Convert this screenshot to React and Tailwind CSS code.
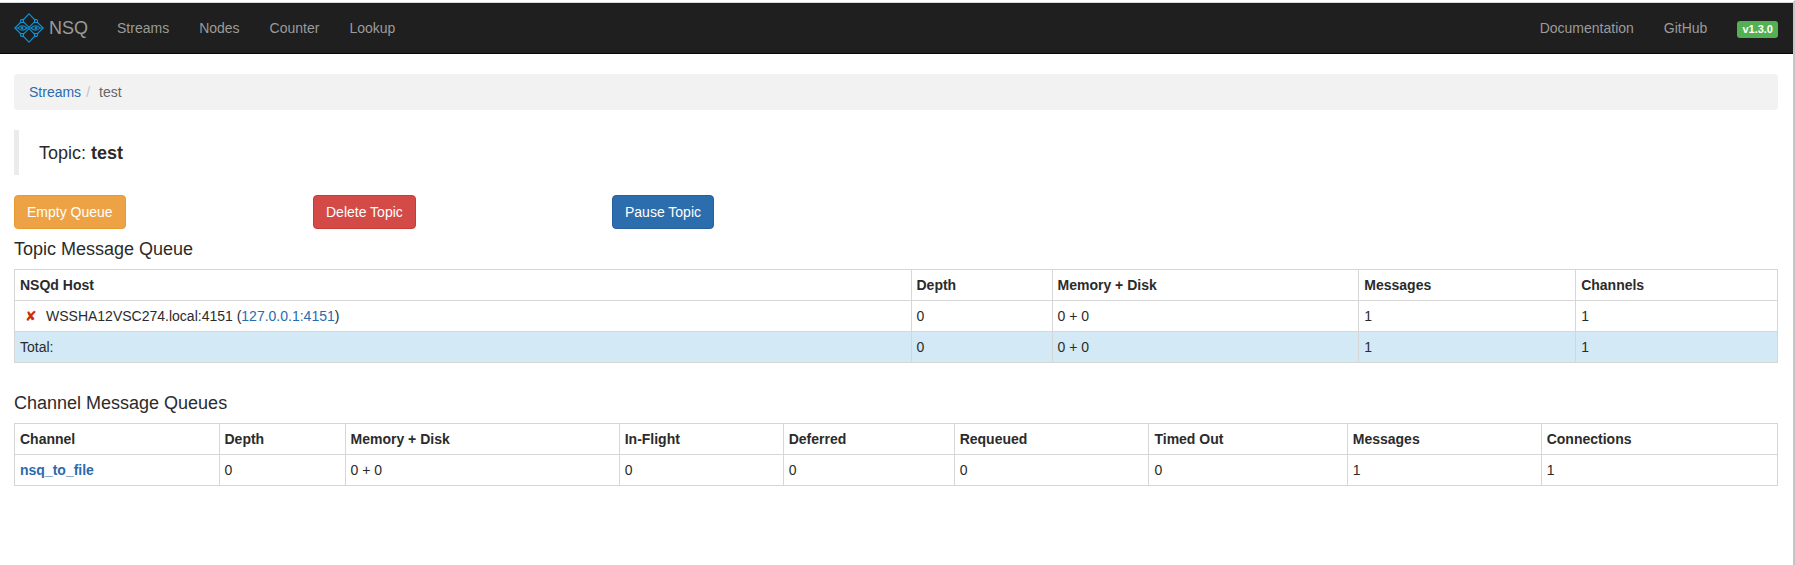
const link = "text-[#2a6bae] hover:underline";

function Logo() {
  return (
    <svg viewBox="0 0 30 30" className="size-[30px]" fill="none" stroke="#1193d4" strokeWidth="1.1" aria-hidden="true">
      <path d="M15 0.800 L21 7 L20.500 9 L15 14.300 L9.500 9 L9 7 Z" />
      <path d="M15 29.200 L21 23 L20.500 21 L15 15.700 L9.500 21 L9 23 Z" />
      <path d="M7.500 6.500 H9.500 V9.500 H6.500 V7.500 Z M22.500 6.500 H20.500 V9.500 H23.500 V7.500 Z" />
      <path d="M7.500 23.500 H9.500 V20.500 H6.500 V22.500 Z M22.500 23.500 H20.500 V20.500 H23.500 V22.500 Z" />
      <path d="M6.500 9.500 L0.800 15 L6.500 20.500 M23.500 9.500 L29.200 15 L23.500 20.500" />
      <path d="M1 15 H4 Q8 10.500 13 15 Q8 19.500 4 15 M29 15 H26 Q22 10.500 17 15 Q22 19.500 26 15 M12.500 15 H17.500" />
      <circle cx="8" cy="15" r="0.900" />
      <circle cx="22" cy="15" r="0.900" />
    </svg>
  );
}

function NavLink({ children }) {
  return (
    <a href="#" className="px-[15px] py-[15px] text-[#9b9b9b] hover:text-white">
      {children}
    </a>
  );
}

function Table({ head, widths, children }) {
  return (
    <table className="w-full table-fixed border-collapse text-left">
      <colgroup>
        {widths.map((w, i) => (
          <col key={i} className={w} />
        ))}
      </colgroup>
      <thead>
        <tr>
          {head.map((h) => (
            <th key={h} scope="col" className="border border-[#d6d6d6] p-[5px] font-bold">
              {h}
            </th>
          ))}
        </tr>
      </thead>
      <tbody>{children}</tbody>
    </table>
  );
}

function Cell({ children }) {
  return <td className="border border-[#d6d6d6] p-[5px]">{children}</td>;
}

const topicWidths = ["w-[50.85%]", "w-[8%]", "w-[17.4%]", "w-[12.3%]", "w-[11.45%]"];
const channelWidths = [
  "w-[11.6%]", "w-[7.15%]", "w-[15.55%]", "w-[9.3%]", "w-[9.7%]",
  "w-[11.05%]", "w-[11.25%]", "w-[11%]", "w-[13.4%]",
];

export default function App() {
  return (
    <div className="min-h-screen border-t-2 border-r-2 border-t-white border-r-[#c4c4c4] bg-white font-['Liberation_Sans',Arial,sans-serif] text-[14px] leading-[20px] text-[#2b2b2b]">
      <nav className="flex items-center justify-between border-t border-b border-t-[#d9d9d9] border-b-[#080808] bg-[#1f1f1f] pr-[15px] pl-[14px]">
        <div className="flex items-center">
          <a href="#" className="mr-[14px] flex items-center gap-[5px] text-[18px] text-[#9b9b9b]">
            <Logo />
            NSQ
          </a>
          <NavLink>Streams</NavLink>
          <NavLink>Nodes</NavLink>
          <NavLink>Counter</NavLink>
          <NavLink>Lookup</NavLink>
        </div>
        <div className="flex items-center">
          <NavLink>Documentation</NavLink>
          <NavLink>GitHub</NavLink>
          <span className="mt-[2px] ml-[15px] rounded-[3px] bg-[#53b153] px-[5px] text-[11px] leading-[17px] font-bold text-white">
            v1.3.0
          </span>
        </div>
      </nav>

      <main className="pt-5 pr-[15px] pl-[14px]">
        <nav aria-label="Breadcrumb">
          <ol className="flex rounded-[4px] bg-[#f2f2f2] px-[15px] py-2 text-[#666]">
            <li>
              <a href="#" className={link}>Streams</a>
            </li>
            <li>
              <span className="px-[5px] text-[#c4c4c4]">/</span>
              <span className="pl-1">test</span>
            </li>
          </ol>
        </nav>

        <blockquote className="my-5 border-l-[5px] border-[#ebebeb] px-5 pt-[11px] pb-[9px] text-[18px] leading-[25px]">
          Topic: <strong>test</strong>
        </blockquote>

        <div className="grid grid-cols-6 justify-items-start gap-[30px]">
          <button type="button" className="rounded-[4px] border border-[#e8992f] bg-[#eda345] px-3 py-[6px] text-white">Empty Queue</button>
          <button type="button" className="rounded-[4px] border border-[#cb3a37] bg-[#d34a47] px-3 py-[6px] text-white">Delete Topic</button>
          <button type="button" className="rounded-[4px] border border-[#26609f] bg-[#2c6dae] px-3 py-[6px] text-white">Pause Topic</button>
        </div>

        <h4 className="my-[10px] text-[18px] leading-[20px] font-medium">Topic Message Queue</h4>
        <Table head={["NSQd Host", "Depth", "Memory + Disk", "Messages", "Channels"]} widths={topicWidths}>
          <tr>
            <Cell>
              <button type="button" aria-label="Remove host" className="mr-[10px] w-4 pl-[5px] text-[#c9300a]">✘</button>
              WSSHA12VSC274.local:4151 (<a href="#" className={link}>127.0.0.1:4151</a>)
            </Cell>
            <Cell>0</Cell>
            <Cell>0 + 0</Cell>
            <Cell>1</Cell>
            <Cell>1</Cell>
          </tr>
          <tr className="bg-[#d3e9f6]">
            <Cell>Total:</Cell>
            <Cell>0</Cell>
            <Cell>0 + 0</Cell>
            <Cell>1</Cell>
            <Cell>1</Cell>
          </tr>
        </Table>

        <h4 className="mt-[30px] mb-[10px] text-[18px] leading-[20px] font-medium">Channel Message Queues</h4>
        <Table
          head={["Channel", "Depth", "Memory + Disk", "In-Flight", "Deferred", "Requeued", "Timed Out", "Messages", "Connections"]}
          widths={channelWidths}
        >
          <tr>
            <th scope="row" className="border border-[#d6d6d6] p-[5px] font-bold">
              <a href="#" className={link}>nsq_to_file</a>
            </th>
            <Cell>0</Cell>
            <Cell>0 + 0</Cell>
            <Cell>0</Cell>
            <Cell>0</Cell>
            <Cell>0</Cell>
            <Cell>0</Cell>
            <Cell>1</Cell>
            <Cell>1</Cell>
          </tr>
        </Table>
      </main>
    </div>
  );
}
